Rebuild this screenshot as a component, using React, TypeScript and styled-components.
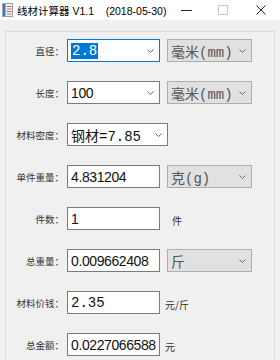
import styled, { createGlobalStyle } from "styled-components";

const GlobalStyle = createGlobalStyle`
  html, body {
    margin: 0;
    padding: 0;
    background: #f0f0f0;
  }
  * {
    box-sizing: border-box;
  }
`;

const SANS = `"Liberation Sans", "Noto Sans CJK SC", sans-serif`;
const SONG = `"Liberation Mono", "Noto Sans CJK SC", monospace`;

const Window = styled.div`
  width: 280px;
  height: 360px;
  background: #f0f0f0;
  overflow: hidden;
  display: flex;
  flex-direction: column;
`;

const TitleBar = styled.div`
  height: 20px;
  background: #ffffff;
  display: flex;
  align-items: center;
  padding-left: 2px;
  flex-shrink: 0;
`;

const Title = styled.span`
  font-family: ${SANS};
  font-size: 10.5px;
  color: #000;
  white-space: pre;
  margin-left: 4px;
  flex: 1;
`;

const Caption = styled.div<{ $w: number }>`
  width: ${(p) => p.$w}px;
  height: 20px;
  display: flex;
  align-items: center;
  justify-content: center;
`;

const Group = styled.div`
  margin: 11px 5px 0 5px;
  border: 1px solid #dcdcdc;
  border-bottom: none;
  flex: 1;
  padding-top: 7px;
  display: flex;
  flex-direction: column;
  gap: 19px;
`;

const Row = styled.div`
  display: flex;
  align-items: center;
  height: 23px;
`;

const Label = styled.div`
  width: 58px;
  margin-right: 3px;
  text-align: right;
  font-family: "Noto Sans CJK SC", sans-serif;
  font-size: 9.5px;
  color: #333;
  white-space: nowrap;
`;

const Field = styled.div<{ $w: number; $focus?: boolean; $gray?: boolean; $song?: boolean }>`
  width: ${(p) => p.$w}px;
  height: 23px;
  border: 1px solid ${(p) => (p.$focus ? "#0078d7" : p.$gray ? "#adadad" : "#7a7a7a")};
  background: ${(p) => (p.$gray ? "#e1e1e1" : "#ffffff")};
  display: flex;
  align-items: center;
  padding-left: 2px;
  font-family: ${(p) => (p.$song ? SONG : SANS)};
  font-size: 14px;
  letter-spacing: ${(p) => (p.$song ? "0" : "-0.4px")};
  color: ${(p) => (p.$gray ? "#555" : "#111")};
  white-space: nowrap;
  overflow: hidden;
`;

const Selected = styled.span`
  background: #0078d7;
  color: #fff;
  padding: 0 1px;
  line-height: 16px;
`;

const Value = styled.span`
  flex: 1;
  padding-left: 1px;
`;

const Arrow = styled.span`
  width: 14px;
  display: flex;
  justify-content: center;
  margin-right: 2px;
`;

const Side = styled.div`
  margin-left: 7px;
  display: flex;
`;

const Unit = styled.span<{ $gap: number }>`
  margin-left: ${(p) => p.$gap}px;
  font-family: "Noto Sans CJK SC", sans-serif;
  font-size: 10px;
  color: #333;
  padding-top: 4px;
`;

const Chevron = () => (
  <Arrow>
    <svg width="7" height="4" viewBox="0 0 7 4">
      <polyline points="0.5,0.5 3.5,3.5 6.5,0.5" fill="none" stroke="#6a6a6a" strokeWidth="1" />
    </svg>
  </Arrow>
);

const AppIcon = () => (
  <svg width="11" height="14" viewBox="0 0 11 14">
    <rect x="0.5" y="0.5" width="10" height="13" fill="#f4f4f4" stroke="#9aa3ad" />
    <rect x="1" y="1" width="2.5" height="12" fill="#3c78c8" />
    <rect x="4.5" y="3" width="5" height="1" fill="#e05050" />
    <rect x="4.5" y="5.5" width="5" height="1" fill="#8a8a8a" />
    <rect x="4.5" y="8" width="5" height="1" fill="#e05050" />
    <rect x="4.5" y="10.5" width="5" height="1" fill="#8a8a8a" />
  </svg>
);

const Combo = ({ w, text, gray, focus, selected }: { w: number; text: string; gray?: boolean; focus?: boolean; selected?: boolean }) => (
  <Field $w={w} $gray={gray} $focus={focus} $song>
    <Value>{selected ? <Selected>{text}</Selected> : text}</Value>
    <Chevron />
  </Field>
);

export default function App() {
  return (
    <Window>
      <GlobalStyle />
      <TitleBar>
        <AppIcon />
        <Title>{"线材计算器 V1.1    (2018-05-30)"}</Title>
        <Caption $w={36}>
          <svg width="11" height="1" viewBox="0 0 11 1">
            <rect width="11" height="1" fill="#222" />
          </svg>
        </Caption>
        <Caption $w={38}>
          <svg width="10" height="10" viewBox="0 0 10 10">
            <rect x="0.5" y="0.5" width="9" height="9" fill="none" stroke="#c8c8c8" />
          </svg>
        </Caption>
        <Caption $w={38}>
          <svg width="10" height="10" viewBox="0 0 10 10">
            <path d="M0.5 0.5 L9.5 9.5 M9.5 0.5 L0.5 9.5" stroke="#222" strokeWidth="1" />
          </svg>
        </Caption>
      </TitleBar>
      <Group>
        <Row>
          <Label>直径：</Label>
          <Combo w={93} text="2.8" focus selected />
          <Side>
            <Combo w={85} text="毫米(mm)" gray />
          </Side>
        </Row>
        <Row>
          <Label>长度：</Label>
          <Field $w={93}>
            <Value>100</Value>
            <Chevron />
          </Field>
          <Side>
            <Combo w={85} text="毫米(mm)" gray />
          </Side>
        </Row>
        <Row>
          <Label>材料密度：</Label>
          <Combo w={101} text="钢材=7.85" />
        </Row>
        <Row>
          <Label>单件重量：</Label>
          <Field $w={93}>
            <Value>4.831204</Value>
          </Field>
          <Side>
            <Combo w={85} text="克(g)" gray />
          </Side>
        </Row>
        <Row>
          <Label>件数：</Label>
          <Field $w={93}>
            <Value>1</Value>
          </Field>
          <Unit $gap={12}>件</Unit>
        </Row>
        <Row>
          <Label>总重量：</Label>
          <Field $w={93}>
            <Value>0.009662408</Value>
          </Field>
          <Side>
            <Combo w={85} text="斤" gray />
          </Side>
        </Row>
        <Row>
          <Label>材料价钱：</Label>
          <Field $w={93} $song>
            <Value>2.35</Value>
          </Field>
          <Unit $gap={5}>元/斤</Unit>
        </Row>
        <Row>
          <Label>总金额：</Label>
          <Field $w={93}>
            <Value>0.0227066588</Value>
          </Field>
          <Unit $gap={5}>元</Unit>
        </Row>
      </Group>
    </Window>
  );
}
